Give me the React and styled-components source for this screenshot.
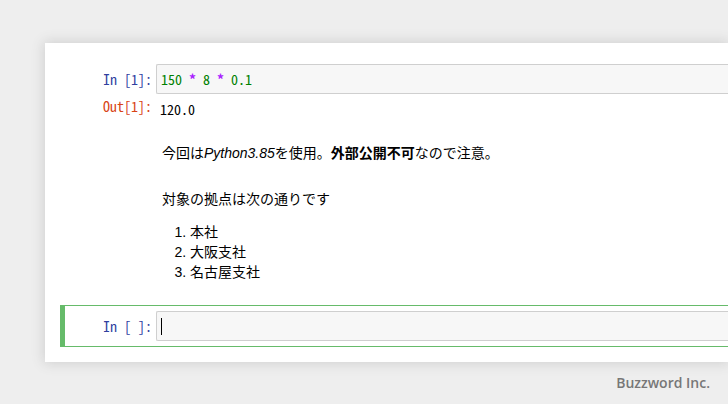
import React from 'react';
import styled, { createGlobalStyle } from 'styled-components';

const GlobalStyle = createGlobalStyle`
    html, body {
        margin: 0;
        padding: 0;
        background: #eeeeee;
        overflow: hidden;
    }
    body {
        width: 728px;
        height: 404px;
        font-family: "Liberation Sans", "Noto Sans CJK JP", sans-serif;
    }
`;

const mono = `"Noto Sans Mono CJK JP", "Liberation Mono", "Noto Sans CJK JP", monospace`;

const Page = styled.div`
    position: relative;
    width: 728px;
    height: 404px;
    padding: 43px 0 0 45px;
    box-sizing: border-box;
    overflow: hidden;
`;

const Notebook = styled.div`
    width: 683px;
    background: #fff;
    padding: 15px 0 15px 15px;
    box-sizing: border-box;
    box-shadow: 0 0 12px 1px rgba(87, 87, 87, 0.2);
`;

const Cell = styled.div`
    display: flex;
    flex-direction: column;
    padding: 5px 0 5px ${(props) => (props.selected ? '1px' : '5px')};
    border: 1px solid ${(props) => (props.selected ? '#66bb6a' : 'transparent')};
    border-right: none;
    border-left: ${(props) => (props.selected ? '5px solid #66bb6a' : '1px solid transparent')};
`;

const Row = styled.div`
    display: flex;
    align-items: ${(props) => props.align || 'center'};
`;

const Prompt = styled.div`
    flex: 0 0 90px;
    box-sizing: border-box;
    padding-right: 4px;
    text-align: right;
    font-family: ${mono};
    font-size: 14px;
    color: ${(props) => (props.out ? '#d84315' : '#303f9f')};
    white-space: pre;
`;

const InputArea = styled.div`
    flex: 1;
    height: 30px;
    box-sizing: border-box;
    border: 1px solid #cfcfcf;
    border-right: none;
    border-radius: 2px 0 0 2px;
    background: #f7f7f7;
    display: flex;
    align-items: center;
    padding-left: 4px;
    font-family: ${mono};
    font-size: 14px;
`;

const Code = styled.span`
    white-space: pre;
`;

const Num = styled.span`
    color: #008000;
`;

const Op = styled.span`
    color: #aa22ff;
    font-weight: bold;
`;

const Cursor = styled.span`
    display: inline-block;
    width: 1px;
    height: 17px;
    background: #000;
`;

const Output = styled.div`
    padding: 7px 0 0 4px;
    font-family: ${mono};
    font-size: 14px;
    line-height: 17px;
    color: #000;
`;

const Rendered = styled.div`
    flex: 1;
    padding: 13px 0 6px 6px;
    font-size: 14px;
    line-height: 20px;
    color: #000;

    p {
        margin: 0 0 26px;
    }
    p:last-of-type {
        margin-bottom: 13px;
    }
    ol {
        margin: 0 0 11px;
        padding-left: 28px;
    }
`;

const Watermark = styled.div`
    position: absolute;
    right: 18px;
    bottom: 12px;
    font-family: "Open Sans", "Noto Sans", sans-serif;
    font-size: 14px;
    font-weight: 600;
    color: #777;
`;

const App = () => {
    return (
        <Page>
            <GlobalStyle />
            <Notebook>
                <Cell>
                    <Row>
                        <Prompt>In [1]:</Prompt>
                        <InputArea>
                            <Code>
                                <Num>150</Num> <Op>*</Op> <Num>8</Num> <Op>*</Op> <Num>0.1</Num>
                            </Code>
                        </InputArea>
                    </Row>
                    <Row>
                        <Prompt out>Out[1]:</Prompt>
                        <Output>120.0</Output>
                    </Row>
                </Cell>
                <Cell>
                    <Row align="flex-start">
                        <Prompt />
                        <Rendered>
                            <p>
                                今回は<em>Python3.85</em>を使用。<strong>外部公開不可</strong>なので注意。
                            </p>
                            <p>対象の拠点は次の通りです</p>
                            <ol>
                                <li>本社</li>
                                <li>大阪支社</li>
                                <li>名古屋支社</li>
                            </ol>
                        </Rendered>
                    </Row>
                </Cell>
                <Cell selected>
                    <Row>
                        <Prompt>In [ ]:</Prompt>
                        <InputArea>
                            <Cursor />
                        </InputArea>
                    </Row>
                </Cell>
            </Notebook>
            <Watermark>Buzzword Inc.</Watermark>
        </Page>
    );
};

export default App;
